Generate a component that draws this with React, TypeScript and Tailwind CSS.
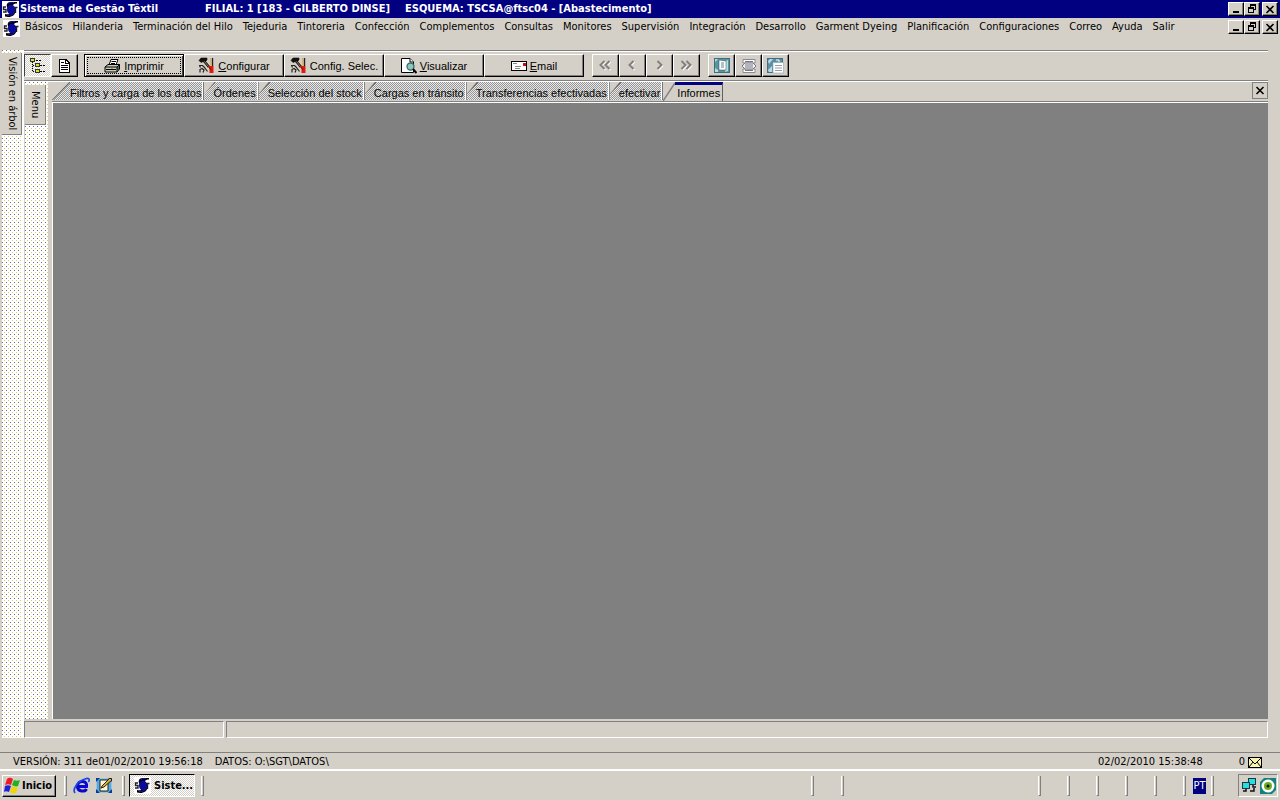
import type { ReactNode } from "react";

const UI_FONT = "font-['DejaVu_Sans_Condensed','DejaVu_Sans',sans-serif]";

const menuItems = [
  "Básicos", "Hilanderia", "Terminación del Hilo", "Tejeduria", "Tintoreria", "Confección",
  "Complementos", "Consultas", "Monitores", "Supervisión", "Integración", "Desarrollo",
  "Garment Dyeing", "Planificación", "Configuraciones", "Correo", "Ayuda", "Salir",
];

const tabs = [
  "Filtros y carga de los datos", "Órdenes", "Selección del stock", "Cargas en tránsito",
  "Transferencias efectivadas", "efectivar",
];

const raised =
  "bg-[#d4d0c8] border border-t-white border-l-white border-r-black border-b-black shadow-[inset_-1px_-1px_0_#808080]";
const dither = "bg-[repeating-conic-gradient(#969696_0_25%,#e8e8e8_0_50%)] bg-size-[2px_2px]";
const pressedFill = "bg-[repeating-conic-gradient(#d4d0c8_0_25%,#ffffff_0_50%)] bg-size-[2px_2px]";
const dots =
  "bg-white bg-[conic-gradient(from_270deg_at_1px_1px,#6c6c86_0_25%,transparent_0),conic-gradient(from_270deg_at_1px_1px,#d8d060_0_25%,transparent_0)] bg-size-[4px_4px] bg-position-[0_0,2px_2px]";

function SgtLogo() {
  return (
    <svg width="17" height="17" viewBox="0 0 17 17" aria-hidden="true">
      <rect width="17" height="17" fill="#fff" />
      <path d="M4 6H1.500V8.500H4V11H1M10 6.500H15.500M13.500 6.500V12" fill="none" stroke="#222" strokeWidth="1.400" />
      <path d="M15 1H9C4.500 1 4 4.500 5.500 7C6 10 8 9.500 8 11.500C8 13.500 5 13.500 3 13V15.500C8 17 13.500 15 13.500 10C13.500 7 11 6 11 4.500C11 3 13 2.500 15 2.500Z" fill="#000" />
      <ellipse cx="9" cy="8.500" rx="4" ry="5" fill="#0a0a9c" />
      <path d="M6 3.500C7 1.500 10 1.500 12 1.500M5 14.500C9 15 12 13 13 10" fill="none" stroke="#1616a0" />
    </svg>
  );
}

function CaptionButtons() {
  const base = `${raised} flex h-[14px] items-center justify-center`;
  return (
    <div className="flex pr-[2px]">
      <button aria-label="Minimizar" className={`${base} w-4`}>
        <svg width="12" height="10" viewBox="0 0 12 10"><path d="M3 7h6v2H3z" fill="#000" /></svg>
      </button>
      <button aria-label="Restaurar" className={`${base} w-4`}>
        <svg width="12" height="10" viewBox="0 0 12 10" shapeRendering="crispEdges">
          <path d="M4 0h6v6H8V5h1V2H5v1H4zM2 3h6v6H2zM3 5v3h4V5z" fill="#000" fillRule="evenodd" />
        </svg>
      </button>
      <button aria-label="Cerrar" className={`${base} ml-[2px] w-4`}><CrossIcon /></button>
    </div>
  );
}

function CrossIcon() {
  return (
    <svg width="10" height="9" viewBox="0 0 10 9" aria-hidden="true">
      <path d="M1.500 1L8.500 8M8.500 1L1.500 8" stroke="#000" strokeWidth="1.600" />
    </svg>
  );
}

function ToolsIcon() {
  return (
    <svg width="17" height="17" viewBox="0 0 17 17" aria-hidden="true">
      <path d="M1 3.500L3 1H9V3L7.500 4.500H5.500L3 5.500Z" fill="#111" stroke="#111" strokeWidth="0.600" />
      <path d="M6 4L11 10" stroke="#111" strokeWidth="2.600" />
      <path d="M6.500 4.500L10.500 9.500" stroke="#a87838" strokeWidth="1" />
      <path d="M14.500 1V9" stroke="#222" strokeWidth="1.400" />
      <path d="M12.500 1L13 9" stroke="#d8b060" strokeWidth="1.200" />
      <path d="M1 8.500H4.500L6 10L9.500 14.500M1.500 8.500L2.500 10.500M2 15.500V12.500L4 11.500L6 13L5 15.500" fill="none" stroke="#222" strokeWidth="1.200" />
      <path d="M10 9L15.500 9V16H11.500V12Z" fill="#dc1c0c" />
      <path d="M11 10L13 13" stroke="#7c0c04" />
    </svg>
  );
}

function PrinterIcon() {
  return (
    <svg width="17" height="14" viewBox="0 0 17 14" aria-hidden="true">
      <path d="M5 6L7 0.500H14L12 6" fill="#fff" stroke="#000" />
      <path d="M7.500 2.500H12M7 4.500H11" stroke="#000" />
      <path d="M1 8L4 5.500H15.500V10L13 13H1Z" fill="#c8c8c0" stroke="#000" />
      <path d="M1 8H13V13M13 8L15.500 5.500M2 10.500H12M14 11V7" fill="none" stroke="#000" />
      <path d="M7 9.500H9" stroke="#c8b400" />
    </svg>
  );
}

function PreviewIcon() {
  return (
    <svg width="16" height="16" viewBox="0 0 16 16" aria-hidden="true">
      <path d="M0.500 0.500H9L12.500 4V14.500H0.500Z" fill="#fff" stroke="#000" />
      <path d="M9 0.500V4H12.500" fill="#fff" stroke="#000" />
      <circle cx="9.500" cy="8.500" r="3.500" fill="#8cc6c0" stroke="#356c6c" strokeWidth="1.300" />
      <path d="M12 11L15.500 15" stroke="#000" strokeWidth="2" />
    </svg>
  );
}

function EmailIcon() {
  return (
    <svg width="16" height="10" viewBox="0 0 16 10" aria-hidden="true" shapeRendering="crispEdges">
      <rect x="0.500" y="0.500" width="15" height="9" fill="#fff" stroke="#000" />
      <path d="M2 2h4v1H2zM4 5h6v1H4zM4 7h5v1H4z" fill="#888" />
      <path d="M12 2h3v3h-3z" fill="#c81010" />
    </svg>
  );
}

function TreeIcon() {
  return (
    <svg width="16" height="17" viewBox="0 0 16 17" aria-hidden="true" shapeRendering="crispEdges">
      <path d="M2.500 3V14.500H6M2.500 8.500H6" fill="none" stroke="#000" strokeDasharray="1 1" />
      <path d="M6 3.500H11M10 8.500H16M10 14.500H16" stroke="#000" strokeDasharray="2 1" />
      <g fill="#d8e820" stroke="#333">
        <rect x="0.500" y="1.500" width="4" height="3" />
        <rect x="5.500" y="6.500" width="4" height="3" />
        <rect x="5.500" y="12.500" width="4" height="3" />
      </g>
    </svg>
  );
}

function PageIcon() {
  return (
    <svg width="11" height="14" viewBox="0 0 11 14" aria-hidden="true" shapeRendering="crispEdges">
      <path d="M0.500 0.500H7L10.500 4V13.500H0.500Z" fill="#fff" stroke="#000" />
      <path d="M6.500 1V4.500H10M2 3.500H5M2 6.500H9M2 8.500H9M2 10.500H9" stroke="#000" fill="none" />
    </svg>
  );
}

function NavIcon({ back, double }: { back?: boolean; double?: boolean }) {
  const one = back ? "M8.500 2L4.500 6L8.500 10" : "M5.500 2L9.500 6L5.500 10";
  const two = back ? "M6.500 2L2.500 6L6.500 10M11.500 2L7.500 6L11.500 10" : "M2.500 2L6.500 6L2.500 10M7.500 2L11.500 6L7.500 10";
  const d = double ? two : one;
  return (
    <svg width="15" height="13" viewBox="0 0 15 13" aria-hidden="true">
      <path d={d} transform="translate(1 1)" fill="none" stroke="#fff" strokeWidth="1.600" />
      <path d={d} fill="none" stroke="#808080" strokeWidth="2" />
    </svg>
  );
}

function ReportIcon() {
  return (
    <svg width="16" height="16" viewBox="0 0 16 16" aria-hidden="true">
      <rect x="0.500" y="0.500" width="15" height="14" fill="#5796a0" stroke="#3b7080" />
      <path d="M1 14V10L4 12V14ZM1 1H4L1 4ZM12 3L14 2V13L11 14" fill="#bcdde0" />
      <path d="M5 2L12 3V12H5Z" fill="#fff" stroke="#345" strokeWidth="0.500" />
      <path d="M7 5H10M7 7H10M7 9H10" stroke="#5b8891" />
    </svg>
  );
}

function ScrollIcon() {
  return (
    <svg width="16" height="16" viewBox="0 0 16 16" aria-hidden="true">
      <path d="M2 1.500H14V5H2ZM2 11H14V14.500H2Z" fill="#fff" stroke="#8a8a8a" />
      <path d="M1 8L4 5H12L15 8L12 11H4Z" fill="#f2f2f2" stroke="#778" />
      <path d="M4 7H12M4 9H12M4 3.500H12M4 12.500H12" stroke="#778" />
    </svg>
  );
}

function WindowPageIcon() {
  return (
    <svg width="17" height="16" viewBox="0 0 17 16" aria-hidden="true">
      <rect x="0.500" y="0.500" width="15" height="14" fill="#5c8fa6" stroke="#456d80" />
      <path d="M1 12L5 8V14H2M1 3L3 1H6L2 6Z" fill="#b9dbe3" />
      <path d="M6 4.500H16.500V15H6Z" fill="#fff" stroke="#8aa" strokeWidth="0.600" />
      <path d="M9 2L12 2V4" stroke="#fff" fill="none" />
      <path d="M8 7.500H15M8 10H15M8 12.500H15" stroke="#99a" />
    </svg>
  );
}

function TextButton({ icon, hotkey, rest, focused }: { icon: ReactNode; hotkey?: string; rest: string; focused?: boolean }) {
  return (
    <button
      className={
        focused
          ? "h-[23px] w-[100px] border border-black bg-[#d4d0c8] p-[2px] shadow-[inset_1px_1px_0_#fff,inset_-1px_-1px_0_#404040]"
          : `h-[23px] w-[100px] ${raised}`
      }
    >
      <span className={`flex h-full items-center justify-center gap-[3px] ${focused ? "border border-dotted border-black" : ""}`}>
        {icon}
        <span className="whitespace-nowrap">
          {hotkey && <span className="underline">{hotkey}</span>}
          {rest}
        </span>
      </span>
    </button>
  );
}

function IconButton({ label, children }: { label: string; children: ReactNode }) {
  return (
    <button aria-label={label} className={`flex h-[23px] w-[27px] items-center justify-center ${raised}`}>
      {children}
    </button>
  );
}

function Toolbar() {
  return (
    <div className="flex h-[30px] items-start border-t border-[#808080] pt-[3px] font-['Liberation_Sans',sans-serif] text-[11px] leading-4 shadow-[inset_0_1px_0_#fff]">
      <button
        aria-label="Visión en árbol"
        className={`flex h-[23px] w-[27px] items-center justify-center border border-t-[#404040] border-l-[#404040] border-r-white border-b-white ${pressedFill}`}
      >
        <TreeIcon />
      </button>
      <IconButton label="Documento"><PageIcon /></IconButton>
      <div className="ml-[6px] flex">
        <TextButton icon={<PrinterIcon />} hotkey="I" rest="mprimir" focused />
        <TextButton icon={<ToolsIcon />} hotkey="C" rest="onfigurar" />
        <TextButton icon={<ToolsIcon />} rest="Config. Selec." />
        <TextButton icon={<PreviewIcon />} hotkey="V" rest="isualizar" />
        <TextButton icon={<EmailIcon />} hotkey="E" rest="mail" />
      </div>
      <div className="ml-2 flex">
        <IconButton label="Primero"><NavIcon back double /></IconButton>
        <IconButton label="Anterior"><NavIcon back /></IconButton>
        <IconButton label="Siguiente"><NavIcon /></IconButton>
        <IconButton label="Último"><NavIcon double /></IconButton>
      </div>
      <div className="ml-2 flex">
        <IconButton label="Informe"><ReportIcon /></IconButton>
        <IconButton label="Rollo"><ScrollIcon /></IconButton>
        <IconButton label="Ventana"><WindowPageIcon /></IconButton>
      </div>
    </div>
  );
}

function TabStrip() {
  return (
    <div className="flex h-[20px] items-end justify-between border-b border-[#808080] font-['Liberation_Sans',sans-serif] text-[11px] leading-[14px]">
      <div role="tablist" className="flex">
        {tabs.map((tab, i) => (
          <button
            key={tab}
            role="tab"
            aria-selected={false}
            className={`relative h-[18px] whitespace-nowrap pr-[3px] pt-[3px] ${dither} ${
              i === 0
                ? "pl-[18px] [clip-path:polygon(17px_0,100%_0,100%_100%,0_100%)]"
                : "pl-[9px] [clip-path:polygon(10px_0,100%_0,100%_100%,0_100%,0_12px)]"
            }`}
          >
            <svg
              className="absolute left-0 top-0"
              width={i === 0 ? 18 : 11}
              height="18"
              viewBox={i === 0 ? "0 0 18 18" : "7 0 11 18"}
              aria-hidden="true"
            >
              <path d="M0 18L18 0" stroke="#666" strokeWidth="1.500" />
            </svg>
            <span className="relative">{tab}</span>
            <span className="absolute inset-y-0 right-0 w-[2px] border-l border-white bg-[#777]" />
          </button>
        ))}
        <button role="tab" aria-selected className="flex h-[19px]">
          <svg width="12" height="19" viewBox="0 0 12 19" aria-hidden="true">
            <path d="M0 19L12 1" stroke="#808080" strokeWidth="1.500" />
          </svg>
          <span className="h-[19px] whitespace-nowrap border-r border-t-[3px] border-t-[#000080] border-r-[#606060] px-[2px] pt-[1px]">
            Informes
          </span>
        </button>
      </div>
      <button aria-label="Cerrar ficha" className="mb-[2px] flex h-[17px] w-4 items-center justify-center border border-[#808080]">
        <CrossIcon />
      </button>
    </div>
  );
}

function TaskDivider() {
  return <span className="h-[20px] w-[3px] border-l border-r border-b border-l-white border-r-[#808080] border-b-[#808080]" />;
}

function Taskbar() {
  return (
    <footer className="flex h-[30px] items-center border-t border-white pl-[2px] pr-[2px] text-[11px] font-bold">
      <button className={`flex h-[22px] w-[54px] items-center gap-[1px] pl-[1px] ${raised}`}>
        <svg width="17" height="17" viewBox="0 0 17 17" aria-hidden="true">
          <path d="M3 2C5 0 7 1 9 2L7 8C5 7 3 7 1 8Z" fill="#ed1c24" />
          <path d="M10 3C12 4 14 4 16 3L14 9C12 10 10 9 8 8Z" fill="#20b020" />
          <path d="M1 9C3 8 5 8 7 9L5 15C3 14 1 14 0 15Z" fill="#2020dc" />
          <path d="M8 9C10 10 12 11 14 10L12 16C10 17 7 16 6 15Z" fill="#ecd800" />
        </svg>
        Inicio
      </button>
      <div className="flex items-center pl-2">
        <TaskDivider />
        <a href="#internet" aria-label="Internet Explorer" className="ml-[6px]">
          <svg width="17" height="17" viewBox="0 0 17 17" aria-hidden="true">
            <path d="M13.500 12C12 15 5 15 4.500 10C4 6 7 4 10 4.500C13 5 14 7 13.500 9.500H5" fill="none" stroke="#0808d0" strokeWidth="3" />
            <path d="M2 16C-1 12 5 4 12 2C16 0.500 17 2 15.500 5" fill="none" stroke="#1848e0" strokeWidth="1.700" />
          </svg>
        </a>
        <a href="#escritorio" aria-label="Mostrar escritorio" className="ml-[6px] mr-[9px]">
          <svg width="17" height="17" viewBox="0 0 17 17" aria-hidden="true">
            <rect x="0.500" y="1.500" width="15" height="14" fill="#58a8e0" stroke="#9cc4dc" />
            <path d="M0 5V1H4M12 16H16V12M0 12V16H4M12 1H16V5" fill="#073b94" />
            <path d="M4 3H12V14H4Z" fill="#fff8d8" stroke="#222" />
            <path d="M6 9L14 1L16 3L8 10L5 11Z" fill="#e8b020" stroke="#222" />
          </svg>
        </a>
        <TaskDivider />
      </div>
      <button className={`ml-[4px] flex h-[23px] w-[66px] items-center gap-[3px] border border-t-black border-l-black border-r-white border-b-white pl-1 ${pressedFill}`}>
        <SgtLogo />
        Siste...
      </button>
      <div className="flex pl-[6px]"><TaskDivider /></div>
      <div className="ml-auto flex items-center gap-[26px]">
        <div className="flex gap-[27px] pr-[168px]"><TaskDivider /><TaskDivider /></div>
        <TaskDivider /><TaskDivider /><TaskDivider /><TaskDivider /><TaskDivider /><TaskDivider />
      </div>
      <span className="ml-[7px] flex h-4 w-[13px] items-center justify-center overflow-hidden bg-[#000080] font-normal text-white">PT</span>
      <div className="flex pl-[5px] pr-6"><TaskDivider /></div>
      <div className="flex h-[23px] w-[40px] items-center gap-[3px] border border-t-[#808080] border-l-[#808080] border-r-white border-b-white pl-[3px]">
        <svg width="15" height="16" viewBox="0 0 15 16" aria-hidden="true">
          <rect x="6.500" y="0.500" width="7" height="6" fill="#20e0e0" stroke="#234" />
          <rect x="0.500" y="4.500" width="7" height="6" fill="#20e0e0" stroke="#234" />
          <path d="M4 11V13H1M11 7V9H14M8 13H12V10" fill="none" stroke="#111" strokeWidth="1.500" />
        </svg>
        <svg width="16" height="16" viewBox="0 0 16 16" aria-hidden="true">
          <path d="M4 0H16V12L12 16H0V4Z" fill="#16817c" />
          <circle cx="8" cy="8" r="6.500" fill="#fff" />
          <circle cx="8" cy="8" r="4" fill="#6caa20" />
          <circle cx="8" cy="8" r="1.500" fill="#111" />
        </svg>
      </div>
    </footer>
  );
}

export default function App() {
  return (
    <div className={`flex min-h-screen flex-col bg-[#d4d0c8] text-[11px] leading-[14px] text-black ${UI_FONT}`}>
      <header className="flex h-[18px] items-center justify-between bg-[#000080] pl-[2px] font-bold text-white">
        <div className="flex items-center whitespace-nowrap">
          <SgtLogo />
          <h1 className="w-[186px] pl-[1px]">Sistema de Gestão Têxtil</h1>
          <span className="mr-[15px]">FILIAL: 1 [183 - GILBERTO DINSE]</span>
          <span>ESQUEMA: TSCSA@ftsc04 - [Abastecimento]</span>
        </div>
        <CaptionButtons />
      </header>
      <div className="flex h-8 items-start justify-between pl-[3px] pt-[2px]">
        <div className="flex items-start">
          <SgtLogo />
          <nav className="flex gap-[10px] whitespace-nowrap pl-[5px]">
            {menuItems.map((item) => (
              <button key={item}>{item}</button>
            ))}
          </nav>
        </div>
        <CaptionButtons />
      </div>
      <main className="flex flex-1 pl-[2px] pr-3">
        <aside className={`w-[22px] border-r-2 border-white pt-[3px] ${dots}`}>
          <button className="flex h-[82px] w-[20px] items-center justify-center border-r border-b border-[#808080] bg-[#d4d0c8]">
            <span className="whitespace-nowrap [writing-mode:vertical-rl]">Visión en árbol</span>
          </button>
        </aside>
        <div className="flex min-w-0 flex-1 flex-col">
          <Toolbar />
          <div className="flex flex-1 border-t border-[#808080] shadow-[inset_0_1px_0_#fff]">
            <aside className={`ml-[1px] mt-[1px] w-[23px] pt-[3px] ${dots}`}>
              <button className="flex h-[40px] w-[21px] items-center justify-center border-r border-b border-[#808080] bg-[#d4d0c8]">
                <span className="[writing-mode:vertical-rl]">Menu</span>
              </button>
            </aside>
            <div className="ml-[4px] flex min-w-0 flex-1 flex-col pt-[1px]">
              <TabStrip />
              <section aria-label="Informes" className="flex-1 border-l border-t border-white bg-[#808080]" />
            </div>
          </div>
          <div className="flex h-[19px] gap-[2px] pt-[2px]">
            <div className="w-[200px] border border-t-[#808080] border-l-[#808080] border-r-white border-b-white" />
            <div className="flex-1 border border-t-[#808080] border-l-[#808080] border-r-white border-b-white" />
          </div>
        </div>
      </main>
      <div className="mt-[14px] flex h-[18px] items-center justify-between whitespace-nowrap border-t border-b border-t-[#808080] border-b-white pl-[13px] pr-[18px] pt-[2px]">
        <div className="flex gap-3">
          <span>VERSIÓN: 311 de01/02/2010 19:56:18</span>
          <span>DATOS: O:\SGT\DATOS\</span>
        </div>
        <div className="flex items-center">
          <time className="mr-9">02/02/2010 15:38:48</time>
          <span className="mr-[3px]">0</span>
          <svg width="14" height="11" viewBox="0 0 14 11" aria-label="Mensajes">
            <rect x="0.500" y="0.500" width="13" height="10" fill="#f8f4b0" stroke="#000" />
            <path d="M1 1L7 7L13 1M1 10L5 5M13 10L9 5" fill="none" stroke="#000" />
          </svg>
        </div>
      </div>
      <Taskbar />
    </div>
  );
}
